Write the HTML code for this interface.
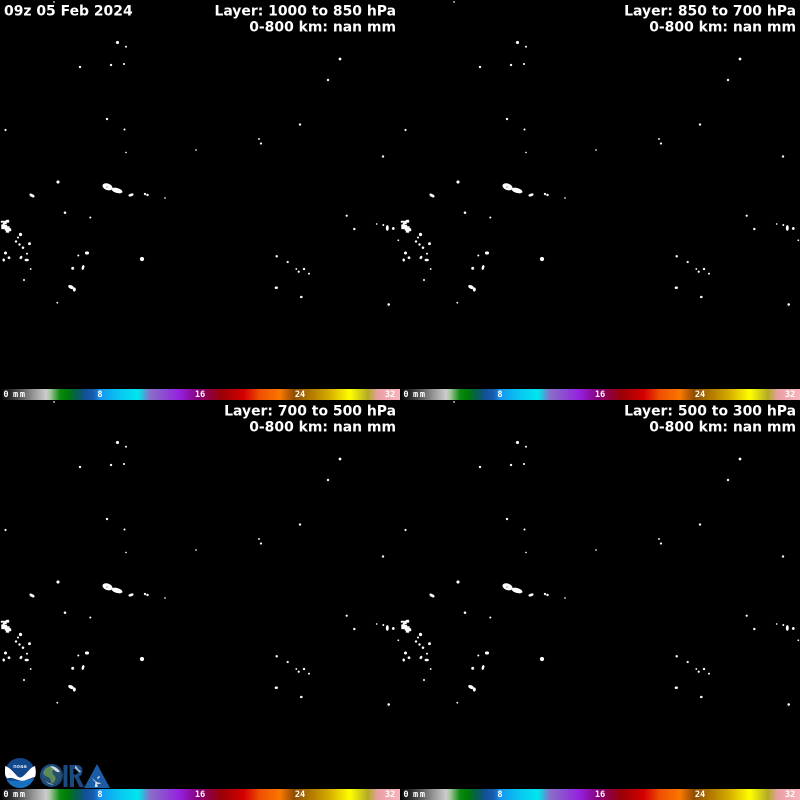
<!DOCTYPE html>
<html lang="en">
<head>
<meta charset="utf-8">
<title>Layer Precipitable Water</title>
<style>
html,body{margin:0;padding:0;background:#000;width:800px;height:800px;overflow:hidden}
svg{display:block}
.t{font-family:"DejaVu Sans","Liberation Sans",sans-serif;font-weight:700;font-size:13.95px;fill:#fff}
.c{font-family:"DejaVu Sans Mono","Liberation Mono",monospace;font-weight:700;font-size:8.6px;fill:#fff;text-anchor:middle}
</style>
</head>
<body>
<svg width="800" height="800" viewBox="0 0 800 800" xmlns="http://www.w3.org/2000/svg">
<defs>
<linearGradient id="cb" gradientUnits="userSpaceOnUse" x1="0" y1="0" x2="400" y2="0">
<stop offset="0" stop-color="#000"/>
<stop offset=".01" stop-color="#111"/>
<stop offset=".05" stop-color="#555"/>
<stop offset=".085" stop-color="#999"/>
<stop offset=".115" stop-color="#ccc"/>
<stop offset=".125" stop-color="#a8c8a0"/>
<stop offset=".15" stop-color="#0a8a10"/>
<stop offset=".165" stop-color="#008000"/>
<stop offset=".19" stop-color="#05604a"/>
<stop offset=".215" stop-color="#14509a"/>
<stop offset=".235" stop-color="#1660b0"/>
<stop offset=".25" stop-color="#1496f0"/>
<stop offset=".30" stop-color="#08c8f0"/>
<stop offset=".345" stop-color="#00e6ee"/>
<stop offset=".375" stop-color="#8870c8"/>
<stop offset=".45" stop-color="#9620e0"/>
<stop offset=".495" stop-color="#880078"/>
<stop offset=".55" stop-color="#980008"/>
<stop offset=".61" stop-color="#d40000"/>
<stop offset=".65" stop-color="#ee5000"/>
<stop offset=".70" stop-color="#fa7800"/>
<stop offset=".735" stop-color="#904c00"/>
<stop offset=".82" stop-color="#d4a800"/>
<stop offset=".875" stop-color="#ffff00"/>
<stop offset=".92" stop-color="#b4aa28"/>
<stop offset=".945" stop-color="#e8a0a8"/>
<stop offset="1" stop-color="#f8b4bc"/>
</linearGradient>
<g id="map" fill="#fff">
<g stroke="#fff" stroke-width=".5">
<circle cx="54" cy="2" r=".6"/><circle cx="117.5" cy="42.5" r="1.4"/><circle cx="126" cy="46.7" r=".8"/>
<circle cx="80" cy="67" r="1"/><circle cx="111" cy="65" r="1"/><circle cx="124" cy="64" r=".8"/>
<circle cx="340" cy="59" r="1.2"/><circle cx="328" cy="80" r="1"/><circle cx="107" cy="119" r="1"/>
<circle cx="124.5" cy="129.5" r=".8"/><circle cx="5.5" cy="130" r=".9"/><circle cx="300" cy="124.5" r="1"/>
<circle cx="259" cy="139" r=".7"/><circle cx="261" cy="143.5" r=".9"/><circle cx="126" cy="152.5" r=".6"/>
<circle cx="196" cy="150" r=".6"/><circle cx="383" cy="156.5" r="1"/>
<circle cx="58" cy="182" r="1.4"/><ellipse cx="32" cy="195.5" rx="2.6" ry="1.2" transform="rotate(30 32 195.5)"/>
<circle cx="65" cy="212.7" r="1.1"/><circle cx="90.3" cy="217.5" r=".8"/>
<ellipse cx="131" cy="195" rx="2.4" ry="1.1" transform="rotate(-20 131 195)"/>
<circle cx="145" cy="194" r="1"/><circle cx="147.5" cy="195" r="1"/><circle cx="165" cy="198" r=".6"/>
<circle cx="20.500" cy="234.500" r="1.500"/><circle cx="18" cy="237.500" r=".8"/><circle cx="16" cy="241.500" r="1"/>
<circle cx="19.500" cy="244.500" r="1"/><circle cx="23" cy="247.700" r="1.100"/><circle cx="29.500" cy="243.700" r="1.300"/>
<circle cx="5.500" cy="253" r="1.300"/><circle cx="27" cy="253.700" r=".8"/><circle cx="9" cy="257.700" r="1.200"/>
<ellipse cx="3.700" cy="260" rx="1" ry="1.400"/><ellipse cx="21" cy="257.500" rx="1" ry="1.500" transform="rotate(30 21 257.500)"/>
<ellipse cx="26.700" cy="260" rx="2" ry="1.100"/><circle cx="30.700" cy="269" r=".7"/><circle cx="24" cy="280" r=".8"/>
<ellipse cx="87" cy="253" rx="1.900" ry="1.400"/><circle cx="78.300" cy="255.500" r=".8"/><circle cx="142" cy="259" r="1.900"/>
<circle cx="72.700" cy="268.300" r="1.300"/><ellipse cx="83" cy="267.500" rx="1" ry="2.200" transform="rotate(15 83 267.500)"/>
<ellipse cx="71" cy="287" rx="2.800" ry="1.500" transform="rotate(25 71 287)"/><ellipse cx="74.300" cy="289.500" rx="1.300" ry="1.900"/>
<circle cx="57.300" cy="302.700" r=".7"/>
<circle cx="346.700" cy="215.700" r=".9"/><circle cx="354.300" cy="229" r="1"/><circle cx="376.700" cy="224" r=".6"/>
<circle cx="383.300" cy="225" r=".8"/><ellipse cx="387.300" cy="228" rx="1.200" ry="2.600"/><circle cx="393.300" cy="228.500" r="1.200"/>
<circle cx="398.300" cy="240.300" r=".7"/><circle cx="276.700" cy="256.300" r="1"/><circle cx="287.700" cy="262" r=".9"/>
<circle cx="296.300" cy="269" r=".7"/><circle cx="298.700" cy="271.700" r=".9"/><circle cx="304" cy="269" r="1"/>
<circle cx="309" cy="273.700" r=".8"/><ellipse cx="276.300" cy="287.700" rx="1.500" ry="1.100"/><ellipse cx="301.300" cy="297" rx="1.200" ry="1"/>
<circle cx="388.700" cy="304.500" r="1.100"/>
</g>
<ellipse cx="107.500" cy="186.800" rx="5.200" ry="3.300" transform="rotate(20 107.500 186.800)"/>
<ellipse cx="117" cy="190.500" rx="5.600" ry="2.500" transform="rotate(15 117 190.500)"/>
<circle cx="107" cy="187" r=".6" fill="#555"/>
<path d="M1 221h5v-1h3v2.500h-2.500v1.500h-2v1h2.500v1.500h2.500v2h1.500v2.500h-2v1.500h-3v-2h-1v-1.500h-3.500v-4.500h1.500v-1.500h2v-.5h-4z" stroke="#fff" stroke-width=".4"/>
<rect x="0" y="389" width="400" height="11" fill="url(#cb)"/>
</g>
<clipPath id="earth"><circle cx="52" cy="775.500" r="9.500"/></clipPath>
</defs>
<rect width="800" height="800" fill="#000"/>
<use href="#map"/>
<use href="#map" x="400"/>
<use href="#map" y="400"/>
<use href="#map" x="400" y="400"/>

<text class="t" x="4" y="15.300">09z 05 Feb 2024</text>
<g text-anchor="end">
<text class="t" x="396" y="15.300">Layer: 1000 to 850 hPa</text>
<text class="t" x="396" y="31.700">0-800 km: nan mm</text>
<text class="t" x="796" y="15.300">Layer: 850 to 700 hPa</text>
<text class="t" x="796" y="31.700">0-800 km: nan mm</text>
<text class="t" x="396" y="415.300">Layer: 700 to 500 hPa</text>
<text class="t" x="396" y="431.700">0-800 km: nan mm</text>
<text class="t" x="796" y="415.300">Layer: 500 to 300 hPa</text>
<text class="t" x="796" y="431.700">0-800 km: nan mm</text>
</g>

<g class="c">
<text class="c" x="6" y="397">0</text><text class="c" x="19" y="397" textLength="12">mm</text><text class="c" x="100" y="397">8</text><text class="c" x="200" y="397">16</text><text class="c" x="300" y="397">24</text><text class="c" x="390" y="397">32</text>
<text class="c" x="406" y="397">0</text><text class="c" x="419" y="397" textLength="12">mm</text><text class="c" x="500" y="397">8</text><text class="c" x="600" y="397">16</text><text class="c" x="700" y="397">24</text><text class="c" x="790" y="397">32</text>
<text class="c" x="6" y="797">0</text><text class="c" x="19" y="797" textLength="12">mm</text><text class="c" x="100" y="797">8</text><text class="c" x="200" y="797">16</text><text class="c" x="300" y="797">24</text><text class="c" x="390" y="797">32</text>
<text class="c" x="406" y="797">0</text><text class="c" x="419" y="797" textLength="12">mm</text><text class="c" x="500" y="797">8</text><text class="c" x="600" y="797">16</text><text class="c" x="700" y="797">24</text><text class="c" x="790" y="797">32</text>
</g>

<!-- NOAA logo -->
<circle cx="20" cy="773" r="15" fill="#12478c"/>
<path d="M7 780.500A15 15 0 0 0 34 778.500L20 781z" fill="#1a70c0"/>
<path d="M5.200 766c4 1.500 7 4.500 10 8 2 2.300 3.500 3.500 5 3.500 2 0 5-3 8.500-7 2-2.200 4-3.800 6.300-4.500.5 2 .9 4.500.8 7-.1 1.500-.3 2.500-.8 4-3 .5-6 2-9 3-2 .8-4 1-6 .5-3-.6-5.500-2-8-2.500-1.500-.3-3-.2-4.800.2C5.200 776 5 774.500 5 773c0-2.500 0-5 .2-7z" fill="#fff"/>
<text x="20" y="768" font-family="'DejaVu Sans',sans-serif" font-size="5" font-weight="700" fill="#c8d6e8" text-anchor="middle">noaa</text>

<!-- CIRA logo -->
<circle cx="51.500" cy="775.500" r="11.500" fill="#1c4a80"/>
<circle cx="53" cy="775.500" r="9.500" fill="#1c3a66"/>
<g clip-path="url(#earth)">
<circle cx="52" cy="775.500" r="9.500" fill="#24506e"/>
<path d="M45 768c3-2 7-2 10-1 2 1 1 3-1 3-1 0-2 1-1.500 3 .5 2 2.500 2.500 3 4.500.5 2.500-1.500 5-3.500 6-1.500-2-1-4-2.500-5.500-2-1.800-5-1.500-6-4-1-2 .5-4.500 1.500-6z" fill="#5d8a58"/>
<path d="M50 766c4 0 8 2 10 6-3 .5-5-1-6-2.500-1-1-3-2-4-3.500z" fill="#d4dbe0"/>
<path d="M46 781c2 2 5 3 8 3-2 1-6 .5-8-3z" fill="#c8d0d8"/>
</g>
<path d="M63.500 765h4v22h-4z" fill="#1a4a80"/>
<path d="M69.500 765h7c4 0 6 2.400 6 6 0 3-1.500 5-3.700 5.700l5.200 10.300h-4.500l-4.700-9.500h-.8v9.500h-4zM73.500 769v5.500h2c1.500 0 2.500-1.200 2.500-2.700 0-1.600-1-2.800-2.500-2.800z" fill="#1a4a80"/>
<path d="M97 764l13 24h-26z" fill="#1c5ca4"/>
<path d="M92.500 778c2 3 5 5 9 5-1.500 1-3 1-4.500.7l.8 3.300h-3l.7-5c-1.500-1-2.800-2.500-3-4zM97 778l2-2 1 1-2 2z" fill="#dbe4ee"/>
<path d="M75 765.500l2 1.500 1 2 3 2.500-1 1-3-2-2-2z" fill="#a9bccf"/>
</svg>
</body>
</html>
